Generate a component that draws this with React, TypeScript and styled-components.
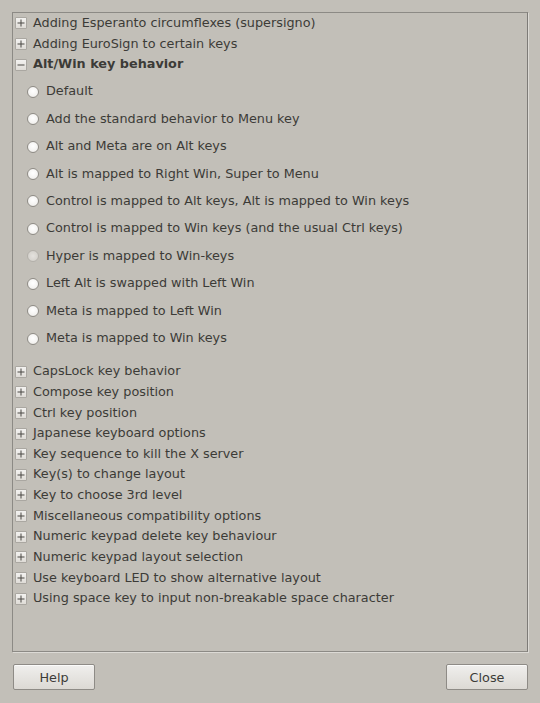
import React from "react";
import styled, { createGlobalStyle } from "styled-components";

const Global = createGlobalStyle`
  html, body { margin: 0; padding: 0; }
  body {
    background: #c2bfb8;
    font-family: "DejaVu Sans", "Liberation Sans", sans-serif;
    font-size: 12.8px;
    color: #3c3b37;
  }
`;

const Dialog = styled.div`
  width: 540px;
  height: 703px;
  box-sizing: border-box;
  padding: 12px 12px 13px 12px;
  display: flex;
  flex-direction: column;
  background: #c2bfb8;
`;

const Panel = styled.div`
  flex: 1;
  border: 1px solid #8c8a85;
  border-right: 1px solid #7d7b77;
  box-shadow: 1px 1px 0 #dcdad5;
  display: flex;
  flex-direction: column;
`;

const Row = styled.div`
  height: 20.65px;
  display: flex;
  align-items: center;
  padding-left: 2px;
  gap: 6px;
  white-space: nowrap;
`;

const Label = styled.span<{ $bold?: boolean }>`
  font-weight: ${(p) => (p.$bold ? "bold" : "normal")};
  line-height: 1;
`;

const Expander = styled.span`
  width: 12px;
  height: 12px;
  box-sizing: border-box;
  border: 1px solid #aaa7a1;
  border-radius: 1px;
  background: linear-gradient(#f3f2f0, #dfdcd7);
  display: flex;
  align-items: center;
  justify-content: center;
  flex: none;
`;

const RadioList = styled.div`
  display: flex;
  flex-direction: column;
  padding-top: 3px;
  padding-bottom: 9px;
`;

const RadioRow = styled.div`
  height: 27.45px;
  display: flex;
  align-items: center;
  padding-left: 14px;
  gap: 7px;
  white-space: nowrap;
`;

const Radio = styled.span<{ $dim?: boolean }>`
  width: 12px;
  height: 12px;
  box-sizing: border-box;
  border-radius: 50%;
  border: 1px solid ${(p) => (p.$dim ? "#b3b0aa" : "#8f8c86")};
  background: ${(p) =>
    p.$dim
      ? "radial-gradient(circle at 50% 50%, #e4e2de 0, #cfccc6 100%)"
      : "radial-gradient(circle at 50% 40%, #ffffff 0, #f4f3f1 60%, #e2e0dc 100%)"};
  flex: none;
`;

const Footer = styled.div`
  display: flex;
  justify-content: space-between;
  margin-top: 12px;
`;

const Button = styled.button`
  width: 82px;
  height: 26px;
  box-sizing: border-box;
  border: 1px solid #8e8b86;
  border-radius: 2px;
  background: linear-gradient(#f0efed, #dcd9d4);
  box-shadow: inset 0 1px 0 #fbfbfa;
  font-family: "DejaVu Sans", "Liberation Sans", sans-serif;
  font-size: 12.8px;
  color: #3c3b37;
  padding: 0;
  margin-left: 1px;
`;

const Plus = ({ minus }: { minus?: boolean }) => (
  <svg width="8" height="8" viewBox="0 0 8 8">
    <rect x="0.5" y="3.5" width="7" height="1" fill="#4a4945" />
    {!minus && <rect x="3.5" y="0.5" width="1" height="7" fill="#4a4945" />}
  </svg>
);

const before = ["Adding Esperanto circumflexes (supersigno)", "Adding EuroSign to certain keys"];
const radios = [
  "Default",
  "Add the standard behavior to Menu key",
  "Alt and Meta are on Alt keys",
  "Alt is mapped to Right Win, Super to Menu",
  "Control is mapped to Alt keys, Alt is mapped to Win keys",
  "Control is mapped to Win keys (and the usual Ctrl keys)",
  "Hyper is mapped to Win-keys",
  "Left Alt is swapped with Left Win",
  "Meta is mapped to Left Win",
  "Meta is mapped to Win keys",
];
const after = [
  "CapsLock key behavior",
  "Compose key position",
  "Ctrl key position",
  "Japanese keyboard options",
  "Key sequence to kill the X server",
  "Key(s) to change layout",
  "Key to choose 3rd level",
  "Miscellaneous compatibility options",
  "Numeric keypad delete key behaviour",
  "Numeric keypad layout selection",
  "Use keyboard LED to show alternative layout",
  "Using space key to input non-breakable space character",
];

export default function App() {
  return (
    <>
      <Global />
      <Dialog>
        <Panel>
          {before.map((t) => (
            <Row key={t}>
              <Expander><Plus /></Expander>
              <Label>{t}</Label>
            </Row>
          ))}
          <Row>
            <Expander><Plus minus /></Expander>
            <Label $bold>Alt/Win key behavior</Label>
          </Row>
          <RadioList>
            {radios.map((t) => (
              <RadioRow key={t}>
                <Radio $dim={t === "Hyper is mapped to Win-keys"} />
                <Label>{t}</Label>
              </RadioRow>
            ))}
          </RadioList>
          {after.map((t) => (
            <Row key={t}>
              <Expander><Plus /></Expander>
              <Label>{t}</Label>
            </Row>
          ))}
        </Panel>
        <Footer>
          <Button>Help</Button>
          <Button>Close</Button>
        </Footer>
      </Dialog>
    </>
  );
}
